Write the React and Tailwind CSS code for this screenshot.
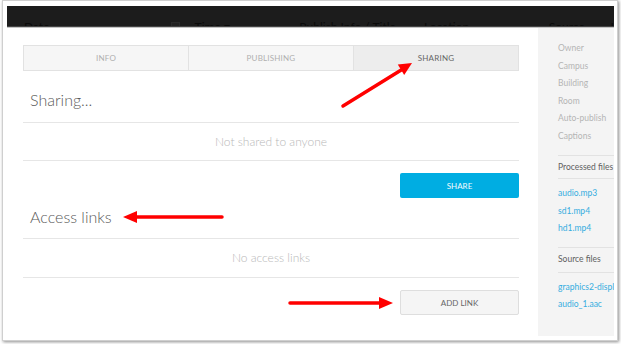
export default function App() {
  const font = { fontFamily: "Lato, 'Open Sans', sans-serif" };
  return (
    <div className="w-[621px] h-[344px] bg-white relative overflow-hidden" style={font}>
      <div className="ml-[2px] w-[616px] h-[341px] border border-[#cfcfcf] shadow-[1px_1px_3px_rgba(0,0,0,0.45)] bg-white pl-[4px] pt-[5px]">
        <div className="w-[607px] h-[332px] flex flex-col">
          {/* dark header bar */}
          <div className="h-[20px] bg-[#1c1c1c] overflow-hidden flex items-start pt-[14px] text-[12px] leading-[14px] text-[#0a0a0a]">
            <span className="ml-[17px] w-[134px]">Date</span>
            <span className="w-[13px]">..</span>
            <span className="w-[24px]"><span className="inline-block w-[9px] h-[9px] border border-[#2a2a2a] bg-[#222]" /></span>
            <span className="w-[105px]">Time ▾</span>
            <span className="w-[125px]">Publish Info / Title</span>
            <span className="w-[125px]">Location</span>
            <span className="w-[62px]">Source</span>
            <span>I</span>
          </div>
          <div className="h-[1px] bg-[#444]" />
          <div className="h-[1px] bg-[#c4c4c4]" />
          <div className="flex flex-1">
            {/* main */}
            <div className="flex-1 pl-[16px] pr-[19px] pt-[17px] flex flex-col">
              <div className="flex h-[26px] border border-[#e2e2e2] text-[8px] tracking-[0.2px] uppercase">
                <div className="flex-1 bg-[#f6f6f6] flex items-center justify-center text-[#b0b0b0] border-r border-[#e2e2e2]">Info</div>
                <div className="flex-1 bg-[#f6f6f6] flex items-center justify-center text-[#b0b0b0] border-r border-[#e2e2e2]">Publishing</div>
                <div className="flex-1 bg-[#ededed] flex items-center justify-center text-[#666]">Sharing</div>
              </div>
              <div className="mt-[19px] pl-[7px] text-[16px] leading-[20px] text-[#5a5a5a] font-light">Sharing...</div>
              <div className="mt-[12px] h-[39px] border-y border-[#e6e6e6] flex items-center justify-center text-[12px] text-[#b8b8b8] font-light">Not shared to anyone</div>
              <div className="mt-[12px] flex justify-end">
                <div className="w-[119px] h-[25px] rounded-[2px] bg-[#00ade2] text-[#f4fbfe] text-[8px] flex items-center justify-center">SHARE</div>
              </div>
              <div className="mt-[9px] pl-[7px] text-[16px] leading-[20px] text-[#5a5a5a] font-light">Access links</div>
              <div className="mt-[11px] h-[40px] border-y border-[#e6e6e6] flex items-center justify-center text-[12px] text-[#b8b8b8] font-light">No access links</div>
              <div className="mt-[12px] flex justify-end">
                <div className="w-[119px] h-[25px] rounded-[2px] bg-[#f5f5f5] border border-[#dedede] text-[#666] text-[8px] flex items-center justify-center">ADD LINK</div>
              </div>
            </div>
            {/* sidebar */}
            <div className="w-[76px] h-[308px] bg-[#f4f4f4] pl-[20px] text-[8.5px] overflow-hidden whitespace-nowrap">
              <div className="pt-[12px] text-[#b4b4b4] leading-[17.5px]">
                <div>Owner</div>
                <div>Campus</div>
                <div>Building</div>
                <div>Room</div>
                <div>Auto-publish</div>
                <div>Captions</div>
              </div>
              <div className="mt-[10px] h-[24px] border-y border-[#e2e2e2] flex items-center text-[#606060]">Processed files</div>
              <div className="pt-[6px] leading-[17.5px] text-[#36ade0]">
                <div>audio.mp3</div>
                <div>sd1.mp4</div>
                <div>hd1.mp4</div>
              </div>
              <div className="mt-[9px] h-[26px] border-y border-[#e2e2e2] flex items-center text-[#606060]">Source files</div>
              <div className="pt-[6px] leading-[17.5px] text-[#36ade0]">
                <div>graphics2-display.mp4</div>
                <div>audio_1.aac</div>
              </div>
            </div>
          </div>
        </div>
      </div>
      {/* annotation arrows */}
      <svg className="absolute left-0 top-0 pointer-events-none" width="621" height="344" viewBox="0 0 621 344">
        <g stroke="#ff0000" strokeWidth="3.5" strokeLinecap="round" fill="none">
          <line x1="343" y1="106" x2="402" y2="69.5" />
          <line x1="222" y1="217" x2="135" y2="217" />
          <line x1="290" y1="303" x2="381" y2="303" />
        </g>
        <g fill="#ff0000">
          <polygon points="412,63 404.2,75 397.8,64.6" />
          <polygon points="123,217 137,211 137,223" />
          <polygon points="393,303 379,297 379,309" />
        </g>
      </svg>
    </div>
  );
}
